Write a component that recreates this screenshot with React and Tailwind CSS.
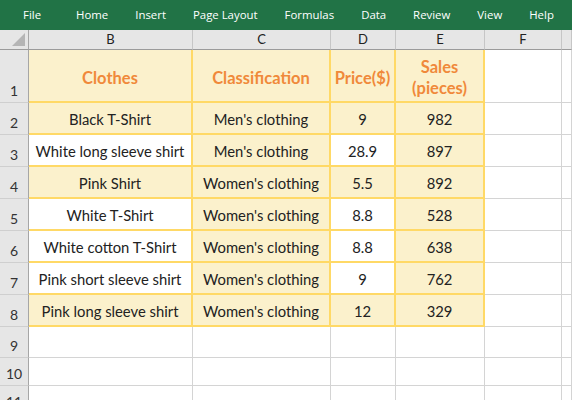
import React from 'react';

const menu = ['File', 'Home', 'Insert', 'Page Layout', 'Formulas', 'Data', 'Review', 'View', 'Help'];

// [clothes, classification, price, sales, whiteB, whiteD]
const rows = [
  ['Black T-Shirt', "Men's clothing", '9', '982', false, false],
  ['White long sleeve shirt', "Men's clothing", '28.9', '897', true, true],
  ['Pink Shirt', "Women's clothing", '5.5', '892', false, false],
  ['White T-Shirt', "Women's clothing", '8.8', '528', true, true],
  ['White cotton T-Shirt', "Women's clothing", '8.8', '638', true, true],
  ['Pink short sleeve shirt', "Women's clothing", '9', '762', true, true],
  ['Pink long sleeve shirt', "Women's clothing", '12', '329', false, false],
];

const font = { fontFamily: 'Lato, "Liberation Sans", sans-serif' };

const RowHead = ({ n, h }) => (
  <div className={`${h} bg-[#e6e6e6] border-r border-r-[#a6a6a6] border-b border-b-[#cfcfcf] flex items-end justify-center pb-[1px] text-[14px] text-[#333]`}>
    {n}
  </div>
);

const Cell = ({ children, white, h, head }) => (
  <div
    className={`${h} ${white ? 'bg-white' : 'bg-[#fbf1cc]'} border-r-2 border-b-2 border-[#ffd966] flex items-center justify-center text-center whitespace-nowrap ${
      head ? 'text-[16.5px] leading-[21px] font-bold text-[#f0893a] pt-[5px]' : 'text-[14.8px] leading-[21px] text-[#222] pt-[2px]'
    }`}
  >
    {children}
  </div>
);

const Blank = ({ h }) => <div className={`${h} bg-white border-r border-b border-[#d4d4d4]`} />;

export default function App() {
  return (
    <div className="w-[572px] h-[400px] overflow-hidden bg-white" style={font}>
      <div
        className="h-[30px] bg-[#217346] flex items-center pl-[23px] gap-[27px] text-white text-[11.4px] whitespace-nowrap"
        style={{ fontFamily: '"Open Sans", "Noto Sans", sans-serif' }}
      >
        {menu.map((m, i) => (
          <span key={m} className={`shrink-0 ${i === 0 ? 'mr-[8px]' : ''}`}>{m}</span>
        ))}
      </div>

      <div className="grid grid-cols-[29px_164px_138px_65px_89px_77px_1fr]">
        {/* column headers */}
        <div className="h-[20px] bg-[#e6e6e6] border-r border-r-[#a6a6a6] border-b border-b-[#9b9b9b] relative">
          <div className="absolute right-[3px] bottom-[3px] w-0 h-0 border-l-[13px] border-l-transparent border-b-[13px] border-b-[#b5b5b5]" />
        </div>
        {['B', 'C', 'D', 'E', 'F', ''].map((c, i) => (
          <div key={i} className="h-[20px] bg-[#e6e6e6] border-r border-r-[#c6c6c6] border-b border-b-[#9b9b9b] flex items-center justify-center text-[13px] text-[#222]">
            {c}
          </div>
        ))}

        {/* row 1 */}
        <RowHead n="1" h="h-[53px]" />
        <Cell h="h-[53px]" head>Clothes</Cell>
        <Cell h="h-[53px]" head>Classification</Cell>
        <Cell h="h-[53px]" head>Price($)</Cell>
        <Cell h="h-[53px]" head>
          Sales
          <br />
          (pieces)
        </Cell>
        <Blank h="h-[53px]" />
        <Blank h="h-[53px]" />

        {rows.map((r, i) => (
          <React.Fragment key={i}>
            <RowHead n={i + 2} h="h-[32px]" />
            <Cell h="h-[32px]" white={r[4]}>{r[0]}</Cell>
            <Cell h="h-[32px]">{r[1]}</Cell>
            <Cell h="h-[32px]" white={r[5]}>{r[2]}</Cell>
            <Cell h="h-[32px]">{r[3]}</Cell>
            <Blank h="h-[32px]" />
            <Blank h="h-[32px]" />
          </React.Fragment>
        ))}

        {[
          ['9', 'h-[31px]'],
          ['10', 'h-[28px]'],
          ['11', 'h-[28px]'],
        ].map(([n, h]) => (
          <React.Fragment key={n}>
            <RowHead n={n} h={h} />
            <Blank h={h} />
            <Blank h={h} />
            <Blank h={h} />
            <Blank h={h} />
            <Blank h={h} />
            <Blank h={h} />
          </React.Fragment>
        ))}
      </div>
    </div>
  );
}
